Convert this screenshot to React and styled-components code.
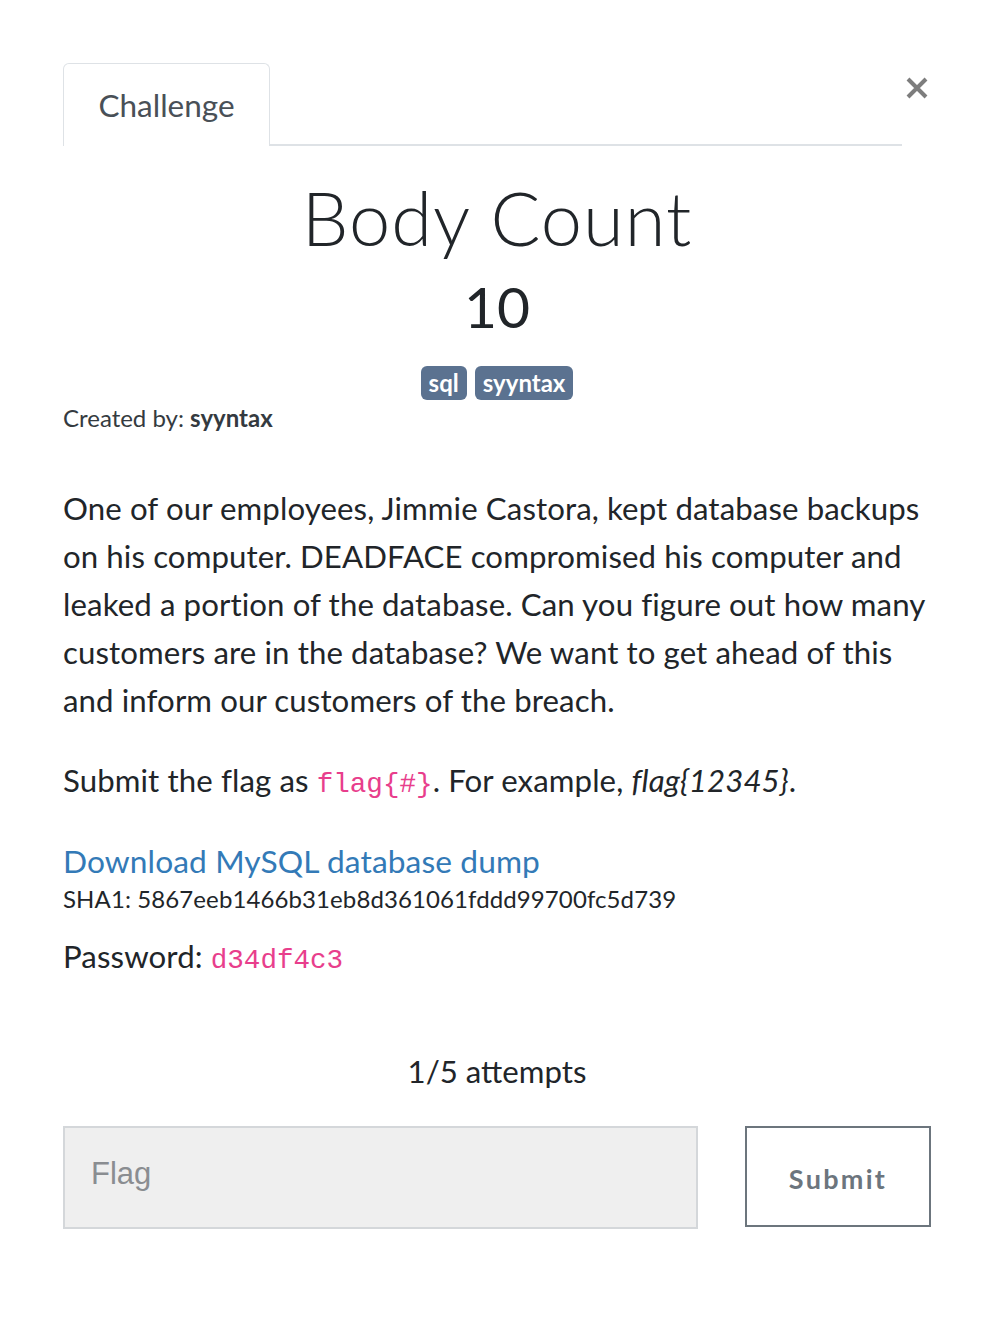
import React from "react";
import styled, { createGlobalStyle } from "styled-components";

const Global = createGlobalStyle`
  html, body { margin: 0; padding: 0; background: #fff; }
  body { font-family: Lato, "Open Sans", sans-serif; color: #212529; }
`;

const Modal = styled.div`
  padding: 63px 62px 80px 63px;
  box-sizing: border-box;
  width: 993px;
`;

const Header = styled.div`
  display: flex;
  align-items: flex-start;
`;

const TabNav = styled.div`
  flex: 1;
  display: flex;
  border-bottom: 2px solid #dee2e6;
`;

const Tab = styled.div`
  width: 207px;
  height: 83px;
  box-sizing: border-box;
  border: 1px solid #dee2e6;
  border-bottom: none;
  border-radius: 6px 6px 0 0;
  margin-bottom: -2px;
  background: #fff;
  display: flex;
  align-items: center;
  justify-content: center;
  font-size: 31.5px;
  color: #495057;
`;

const Close = styled.button`
  border: none;
  background: none;
  padding: 0;
  margin-top: 13px;
  width: 29px;
  height: 24px;
  display: flex;
  align-items: center;
  justify-content: center;
  cursor: pointer;
`;

const Title = styled.h2`
  margin: 29px 0 0;
  text-align: center;
  font-family: Lato, sans-serif;
  font-weight: 300;
  font-size: 74px;
  line-height: 86px;
  letter-spacing: 1px;
  color: #212529;
`;

const Value = styled.h3`
  margin: 0;
  text-align: center;
  font-weight: 400;
  font-size: 57px;
  line-height: 90px;
  color: #212529;
`;

const Tags = styled.div`
  display: flex;
  justify-content: center;
  gap: 8px;
  margin-top: 15px;
`;

const Badge = styled.span`
  display: inline-block;
  background: #5b7290;
  color: #fff;
  font-weight: 700;
  font-size: 24px;
  line-height: 34px;
  padding: 0 8px;
  border-radius: 6px;
`;

const Author = styled.div`
  font-size: 24px;
  line-height: 36px;
  color: #343a40;
  b { font-weight: 700; }
`;

const Description = styled.div`
  margin-top: 48px;
  font-size: 31.2px;
  line-height: 48px;
  letter-spacing: 0.1px;
  color: #212529;
  p { margin: 0 0 32px; }
  em { font-style: italic; }
`;

const Code = styled.code`
  font-family: "Liberation Mono", "DejaVu Sans Mono", monospace;
  color: #e83e8c;
  font-size: 27.6px;
  letter-spacing: 0;
`;

const Link = styled.a`
  color: #337ab7;
  text-decoration: none;
  font-size: 31.7px;
  line-height: 40px;
  display: block;
`;

const Hash = styled.div`
  font-size: 24px;
  line-height: 36px;
  color: #212529;
  margin-bottom: 15px;
`;

const Attempts = styled.div`
  text-align: center;
  font-size: 31.2px;
  line-height: 40px;
  margin-top: 66px;
  color: #212529;
`;

const Form = styled.form`
  display: flex;
  gap: 47px;
  margin-top: 35px;
`;

const Input = styled.input`
  flex: 1;
  height: 103px;
  box-sizing: border-box;
  background: #efefef;
  border: 2px solid #d4d7da;
  padding: 0 26px 8px;
  font-family: "Liberation Sans", Arial, sans-serif;
  font-size: 31px;
  color: #495057;
  outline: none;
  &::placeholder { color: #8a8d91; }
`;

const Submit = styled.button`
  width: 186px;
  height: 101px;
  box-sizing: border-box;
  border: 2px solid #6c757d;
  background: #fff;
  color: #6c757d;
  font-family: Lato, sans-serif;
  font-weight: 700;
  font-size: 27px;
  letter-spacing: 2.3px;
  padding: 4px 0 0;
  cursor: pointer;
`;

export default function App() {
  return (
    <>
      <Global />
      <Modal>
        <Header>
          <TabNav>
            <Tab>Challenge</Tab>
          </TabNav>
          <Close aria-label="Close">
            <svg width="22" height="22" viewBox="0 0 22 22">
              <path d="M2 2 L20 20 M20 2 L2 20" stroke="#7d7d7d" strokeWidth="4" strokeLinecap="butt" />
            </svg>
          </Close>
        </Header>
        <Title>Body Count</Title>
        <Value>10</Value>
        <Tags>
          <Badge>sql</Badge>
          <Badge>syyntax</Badge>
        </Tags>
        <Author>
          Created by: <b>syyntax</b>
        </Author>
        <Description>
          <p>
            One of our employees, Jimmie Castora, kept database backups on his computer. DEADFACE compromised his
            computer and leaked a portion of the database. Can you figure out how many customers are in the
            database? We want to get ahead of this and inform our customers of the breach.
          </p>
          <p>
            Submit the flag as <Code>flag{"{#}"}</Code>. For example, <em>flag{"{12345}"}</em>.
          </p>
          <Link href="#">Download MySQL database dump</Link>
          <Hash>SHA1: 5867eeb1466b31eb8d361061fddd99700fc5d739</Hash>
          <div>
            Password: <Code>d34df4c3</Code>
          </div>
        </Description>
        <Attempts>1/5 attempts</Attempts>
        <Form onSubmit={(e) => e.preventDefault()}>
          <Input placeholder="Flag" />
          <Submit type="submit">Submit</Submit>
        </Form>
      </Modal>
    </>
  );
}
